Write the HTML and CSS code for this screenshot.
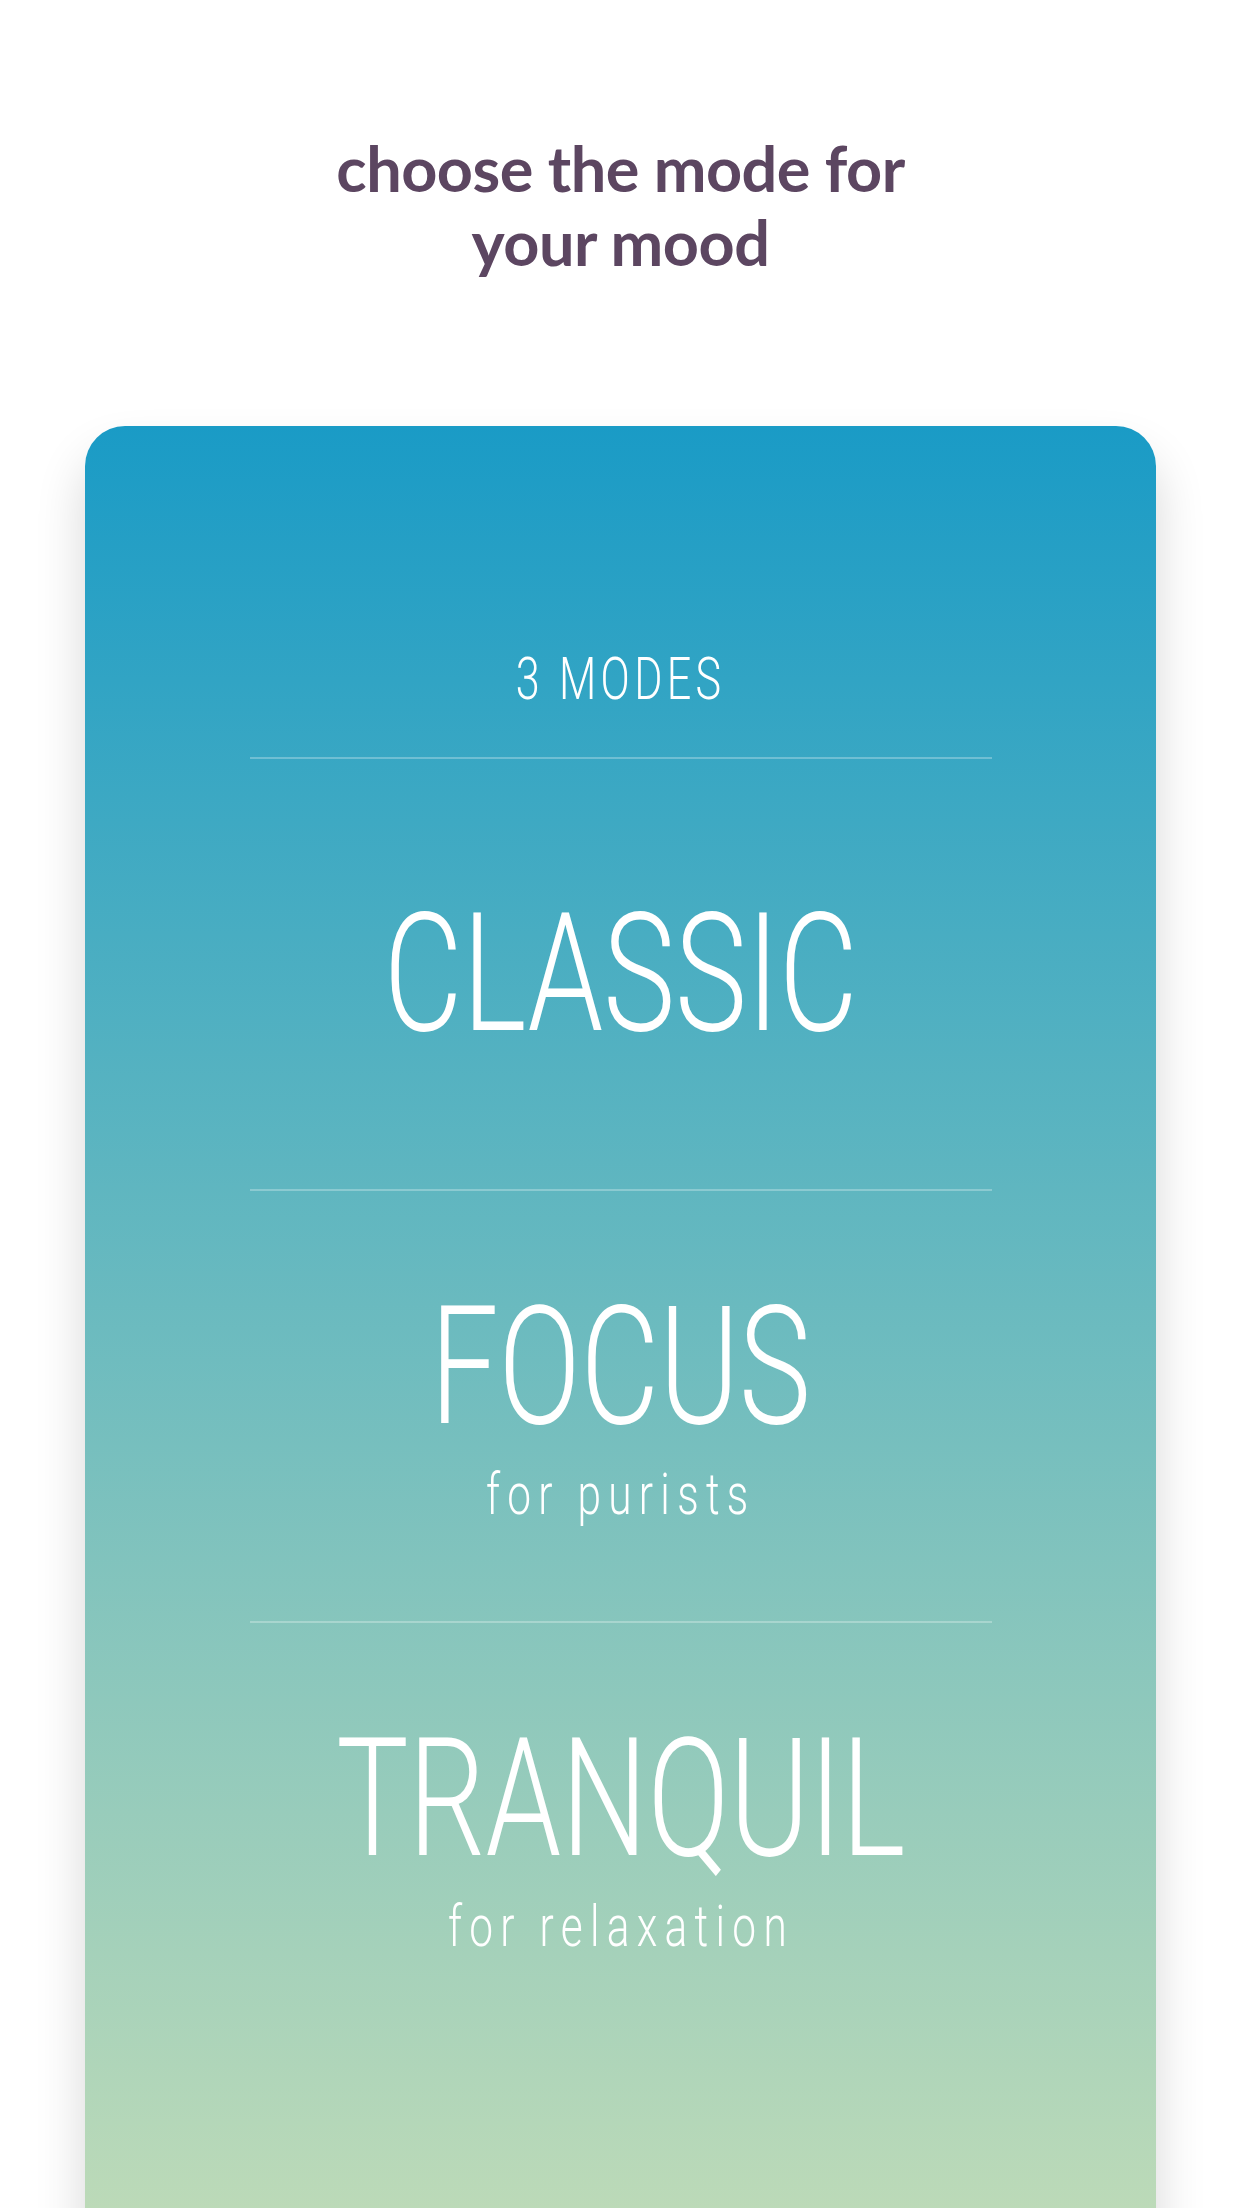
FILE: index.html
```html
<!DOCTYPE html>
<html lang="en">
<head>
<meta charset="utf-8">
<title>Choose the mode for your mood</title>
<link rel="stylesheet" href="styles.css">
</head>
<body>
<main class="page">
  <h1 class="title">choose the mode for<br>your mood</h1>
  <section class="card">
    <header class="card-head">
      <span class="count">3 MODES</span>
    </header>
    <div class="rule"></div>
    <div class="mode">
      <span class="mode-name">CLASSIC</span>
    </div>
    <div class="rule"></div>
    <div class="mode">
      <span class="mode-name">FOCUS</span>
      <span class="mode-sub">for purists</span>
    </div>
    <div class="rule"></div>
    <div class="mode">
      <span class="mode-name">TRANQUIL</span>
      <span class="mode-sub">for relaxation</span>
    </div>
  </section>
</main>
</body>
</html>
```

FILE: styles.css
```css
html, body {
  margin: 0;
  padding: 0;
  background: #ffffff;
}

body {
  height: 2208px;
  overflow: hidden;
}

.page {
  display: flex;
  flex-direction: column;
  align-items: stretch;
  padding: 131px 86px 0 85px;
}

.title {
  margin: 0 0 147px;
  text-align: center;
  font-family: Lato, "Open Sans", sans-serif;
  font-weight: 700;
  font-size: 63px;
  line-height: 74px;
  letter-spacing: -0.5px;
  color: #5c4661;
}

.card {
  display: flex;
  flex-direction: column;
  height: 1840px;
  border-radius: 40px;
  background: linear-gradient(180deg, #1a9bc6 0px, #bcdab8 1782px, #c1dcb8 100%);
  box-shadow: 0 30px 50px rgba(0, 0, 0, 0.16);
  color: #ffffff;
  font-family: Roboto, "Noto Sans", sans-serif;
  font-weight: 300;
}

.card-head {
  display: flex;
  justify-content: center;
  height: 331px;
  box-sizing: border-box;
  padding-top: 223px;
}

.count {
  display: inline-block;
  font-size: 59px;
  line-height: 59px;
  letter-spacing: 6px;
  transform: scaleX(0.73);
}

.rule {
  align-self: center;
  width: 742px;
  height: 2px;
  background: rgba(255, 255, 255, 0.28);
}

.mode {
  height: 430px;
  display: flex;
  flex-direction: column;
  align-items: center;
  justify-content: center;
}

.mode-name {
  display: inline-block;
  font-size: 166px;
  line-height: 166px;
  transform: scaleX(0.73);
}

.mode-sub {
  display: inline-block;
  margin-top: 9px;
  font-size: 58px;
  line-height: 70px;
  letter-spacing: 10px;
  transform: scaleX(0.73);
}
```
